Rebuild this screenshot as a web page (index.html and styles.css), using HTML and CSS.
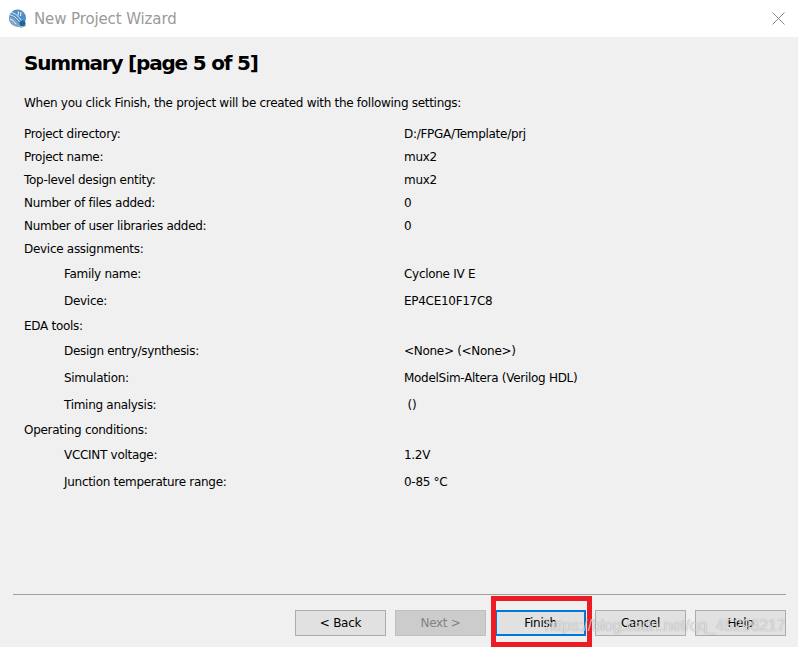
FILE: index.html
```html
<!DOCTYPE html>
<html lang="en">

<head>
  <meta charset="UTF-8">
  <title>New Project Wizard</title>
  <link rel="stylesheet" href="styles.css">
</head>

<body>
  <div class="window">
    <div class="titlebar">
      <svg class="app-icon" width="20" height="20" viewBox="0 0 20 20">
        <circle cx="9.500" cy="9" r="8.500" fill="#4f8fc6" />
        <path d="M1 8.500C4 7 7 10 9 13C10.500 15 13 16.500 16 15.500C14 17.500 11 18.500 8 17.500C3.500 16.500 .5 12.500 1 8.500Z" fill="#7fa6c6" />
        <path d="M2 6C5 6 9 9 11.500 13M3.500 3.500C7 4 10 7 13.500 11.500M2 10C4 10.500 6 12.500 8 15" stroke="#e6eef5" stroke-width="1" fill="none" />
        <path d="M10.500 2.500L10 6.500M13 3L12.500 7" stroke="#ffffff" stroke-width="1" fill="none" />
        <circle cx="14.500" cy="14.500" r="3" fill="#17679f" />
        <path d="M12 18.500L18 16.500" stroke="#9a9a9a" stroke-width="1" />
      </svg>
      <span class="title">New Project Wizard</span>
      <svg class="close" width="13" height="13" viewBox="0 0 13 13">
        <path d="M.5.5L12.500 12.500M12.500.5L.5 12.500" stroke="#8a8a8a" stroke-width="1" fill="none" />
      </svg>
    </div>

    <div class="content">
      <h1>Summary [page 5 of 5]</h1>
      <p class="intro">When you click Finish, the project will be created with the following settings:</p>

      <div class="settings">
        <div class="row"><span>Project directory:</span><span>D:/FPGA/Template/prj</span></div>
        <div class="row"><span>Project name:</span><span>mux2</span></div>
        <div class="row"><span>Top-level design entity:</span><span>mux2</span></div>
        <div class="row"><span>Number of files added:</span><span>0</span></div>
        <div class="row"><span>Number of user libraries added:</span><span>0</span></div>
        <div class="row"><span>Device assignments:</span></div>
        <div class="row sub"><span>Family name:</span><span>Cyclone IV E</span></div>
        <div class="row sub"><span>Device:</span><span>EP4CE10F17C8</span></div>
        <div class="row"><span>EDA tools:</span></div>
        <div class="row sub"><span>Design entry/synthesis:</span><span>&lt;None&gt; (&lt;None&gt;)</span></div>
        <div class="row sub"><span>Simulation:</span><span>ModelSim-Altera (Verilog HDL)</span></div>
        <div class="row sub"><span>Timing analysis:</span><span>&nbsp;()</span></div>
        <div class="row"><span>Operating conditions:</span></div>
        <div class="row sub"><span>VCCINT voltage:</span><span>1.2V</span></div>
        <div class="row sub"><span>Junction temperature range:</span><span>0-85 °C</span></div>
      </div>
    </div>

    <div class="footer">
      <button class="btn">&lt; Back</button>
      <button class="btn" disabled>Next &gt;</button>
      <button class="btn btn-default">Finish</button>
      <button class="btn">Cancel</button>
      <button class="btn">Help</button>
    </div>

    <div class="highlight"></div>
    <div class="watermark">https://blog.csdn.net/qq_45296217</div>
  </div>
</body>

</html>
```

FILE: styles.css
```css
body,
h1,
p {
  margin: 0;
  padding: 0;
}
body {
  font-family: "DejaVu Sans", sans-serif;
  font-size: 12px;
  letter-spacing: -0.29px;
  color: #000;
  background-color: #f0f0f0;
}
.window {
  position: relative;
  display: flex;
  flex-direction: column;
  width: 798px;
  height: 647px;
  overflow: hidden;
}
.titlebar {
  display: flex;
  align-items: center;
  height: 37px;
  padding: 0 13px 0 8px;
  background-color: #fff;
}
.app-icon {
  margin-right: 6px;
}
.title {
  font-size: 15px;
  letter-spacing: -0.12px;
  color: #9a9a9a;
}
.close {
  margin-left: auto;
}
.content {
  flex: 1;
  padding: 0 24px;
}
h1 {
  margin-top: 13px;
  line-height: 26px;
  font-size: 20px;
  letter-spacing: -1.2px;
  font-weight: bold;
}
.intro {
  margin-top: 19px;
  line-height: 16px;
}
.settings {
  margin-top: 11px;
}
.row {
  display: grid;
  grid-template-columns: 380px 1fr;
  align-items: center;
  height: 23px;
}
.sub {
  grid-template-columns: 340px 1fr;
  height: 27px;
  padding-left: 40px;
}
.footer {
  display: flex;
  gap: 9px;
  justify-content: flex-end;
  height: 53px;
  margin: 0 12px 0 13px;
  padding-top: 15px;
  box-sizing: border-box;
  border-top: 1px solid #a0a0a0;
}
.btn {
  width: 91px;
  height: 26px;
  padding: 0;
  font: inherit;
  letter-spacing: inherit;
  color: #000;
  background-color: #e1e1e1;
  border: 1px solid #adadad;
}
.btn:disabled {
  color: #838383;
  background-color: #cccccc;
  border-color: #bfbfbf;
}
.btn-default {
  border: 2px solid #0078d7;
}
.highlight {
  position: absolute;
  left: 491px;
  top: 596px;
  width: 101px;
  height: 51px;
  box-sizing: border-box;
  border: 5px solid #ed1c24;
}
.watermark {
  position: absolute;
  left: 545px;
  top: 617px;
  font-family: "Liberation Sans", sans-serif;
  font-size: 15.7px;
  letter-spacing: 0;
  color: rgba(255, 255, 255, .7);
  text-shadow: 0 0 1px rgba(0, 0, 0, .4);
}
```
